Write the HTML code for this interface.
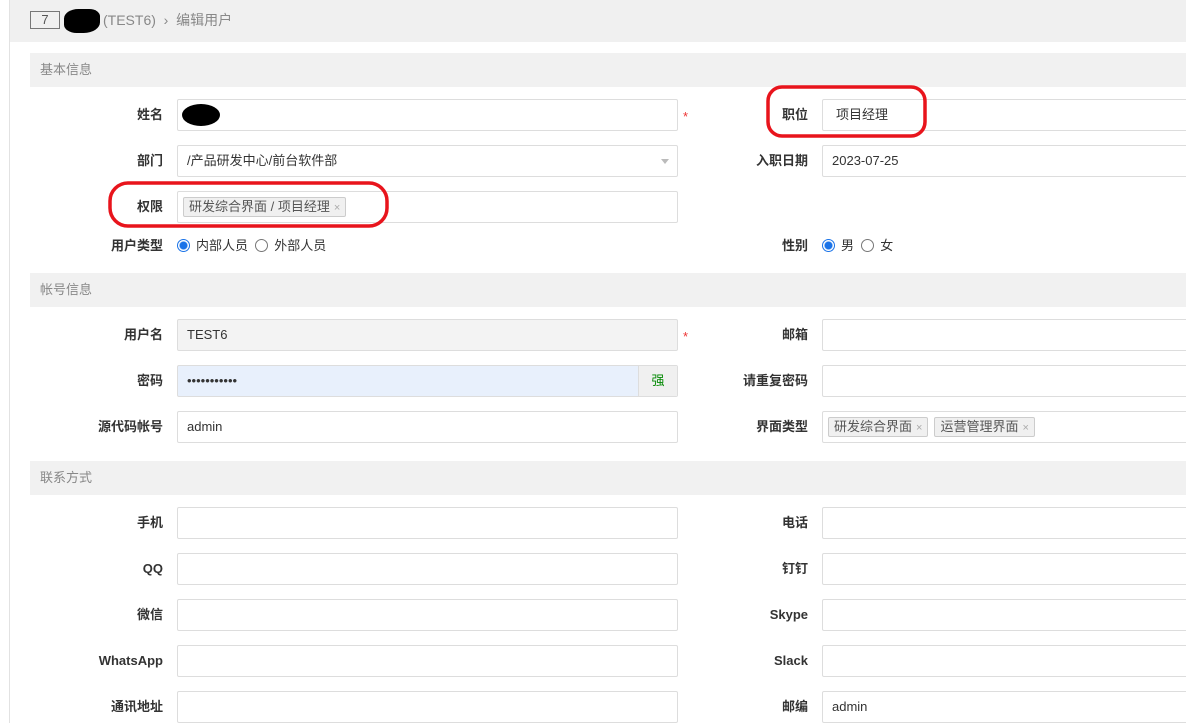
<!DOCTYPE html>
<html><head><meta charset="utf-8"><style>
*{box-sizing:border-box;margin:0;padding:0}
body{width:1186px;height:723px;overflow:hidden;background:#fff;font-family:"Liberation Sans","Noto Sans CJK SC",sans-serif;font-size:13px;color:#333;position:relative;line-height:1.2}
.a{position:absolute}
.lb{position:absolute;text-align:right;font-weight:bold;color:#333;white-space:nowrap;height:32px;line-height:32px}
.in{position:absolute;height:32px;border:1px solid #ddd;border-radius:2px;background:#fff;padding:0 9px;line-height:30px;white-space:nowrap}
.sec{position:absolute;left:30px;width:1156px;height:34px;background:#f1f1f1;color:#888;padding-left:10px;line-height:34px}
.tag{display:inline-block;border:1px solid #ccc;background:#f0f0f0;border-radius:2px;padding:0 5px;line-height:18px;height:20px;margin-top:5px;color:#555;margin-right:6px;vertical-align:top}
.tag i{font-style:normal;color:#aaa;font-size:11px;margin-left:4px}
.r{display:inline-block;width:13px;height:13px;border:1px solid #777;border-radius:50%;vertical-align:-2px;margin-right:6px}
.r.on{border-color:#1a73e8;background:radial-gradient(circle,#1a73e8 3.5px,#fff 4.5px)}
.star{position:absolute;color:#e33;font-size:13px}
.rad{position:absolute;height:20px;line-height:20px}
</style></head><body>
<div class="a" style="left:0;top:0;width:9px;height:723px;background:#fff"></div>
<div class="a" style="left:9px;top:0;width:1px;height:723px;background:#e2e2e2"></div>
<div class="a" style="left:10px;top:0;width:1176px;height:42px;background:#f0f0f0"></div>
<div class="a" style="left:30px;top:11px;width:30px;height:18px;border:1px solid #777;text-align:center;line-height:16px;color:#555;font-size:13px">7</div>
<div class="a" style="left:64px;top:9px;width:36px;height:24px;background:#000;border-radius:40% 30% 45% 35%"></div>
<div class="a" style="left:103px;top:10px;color:#888;font-size:14px;line-height:20px">(TEST6) &nbsp;›&nbsp; 编辑用户</div>

<div class="sec" style="top:53px">基本信息</div>
<div class="lb" style="right:1023px;top:99px">姓名</div>
<div class="in" style="left:177px;top:99px;width:501px"><span class="a" style="left:4px;top:4px;width:38px;height:22px;background:#000;border-radius:50%"></span></div>
<div class="star" style="left:683px;top:109px">*</div>
<div class="lb" style="right:1023px;top:145px">部门</div>
<div class="in" style="left:177px;top:145px;width:501px">/产品研发中心/前台软件部<span class="a" style="right:8px;top:13px;border:4px solid transparent;border-top:5px solid #bbb"></span></div>
<div class="lb" style="right:1023px;top:191px">权限</div>
<div class="in" style="left:177px;top:191px;width:501px;padding-left:5px"><span class="tag">研发综合界面 / 项目经理<i>×</i></span></div>
<div class="lb" style="right:1023px;top:230px">用户类型</div>
<div class="rad" style="left:177px;top:236px"><span class="r on"></span>内部人员 &nbsp;<span class="r"></span>外部人员</div>

<div class="lb" style="right:378px;top:99px">职位</div>
<div class="in" style="left:822px;top:99px;width:370px;padding-left:13px">项目经理</div>
<div class="lb" style="right:378px;top:145px">入职日期</div>
<div class="in" style="left:822px;top:145px;width:370px">2023-07-25</div>
<div class="lb" style="right:378px;top:230px">性别</div>
<div class="rad" style="left:822px;top:236px"><span class="r on"></span>男 &nbsp;<span class="r"></span>女</div>

<div class="sec" style="top:273px">帐号信息</div>
<div class="lb" style="right:1023px;top:319px">用户名</div>
<div class="in" style="left:177px;top:319px;width:501px;background:#f3f3f3">TEST6</div>
<div class="star" style="left:683px;top:329px">*</div>
<div class="lb" style="right:1023px;top:365px">密码</div>
<div class="in" style="left:177px;top:365px;width:501px;background:#e8f0fc;padding-left:9px">•••••••••••<span class="a" style="right:0;top:0;width:39px;height:30px;background:#f0f0f0;border-left:1px solid #ddd;text-align:center;color:#080">强</span></div>
<div class="lb" style="right:1023px;top:411px">源代码帐号</div>
<div class="in" style="left:177px;top:411px;width:501px">admin</div>
<div class="lb" style="right:378px;top:319px">邮箱</div>
<div class="in" style="left:822px;top:319px;width:370px"></div>
<div class="lb" style="right:378px;top:365px">请重复密码</div>
<div class="in" style="left:822px;top:365px;width:370px"></div>
<div class="lb" style="right:378px;top:411px">界面类型</div>
<div class="in" style="left:822px;top:411px;width:370px;padding-left:5px"><span class="tag">研发综合界面<i>×</i></span><span class="tag">运营管理界面<i>×</i></span></div>

<div class="sec" style="top:461px">联系方式</div>
<div class="lb" style="right:1023px;top:507px">手机</div>
<div class="in" style="left:177px;top:507px;width:501px"></div>
<div class="lb" style="right:1023px;top:553px">QQ</div>
<div class="in" style="left:177px;top:553px;width:501px"></div>
<div class="lb" style="right:1023px;top:599px">微信</div>
<div class="in" style="left:177px;top:599px;width:501px"></div>
<div class="lb" style="right:1023px;top:645px">WhatsApp</div>
<div class="in" style="left:177px;top:645px;width:501px"></div>
<div class="lb" style="right:1023px;top:691px">通讯地址</div>
<div class="in" style="left:177px;top:691px;width:501px"></div>
<div class="lb" style="right:378px;top:507px">电话</div>
<div class="in" style="left:822px;top:507px;width:370px"></div>
<div class="lb" style="right:378px;top:553px">钉钉</div>
<div class="in" style="left:822px;top:553px;width:370px"></div>
<div class="lb" style="right:378px;top:599px">Skype</div>
<div class="in" style="left:822px;top:599px;width:370px"></div>
<div class="lb" style="right:378px;top:645px">Slack</div>
<div class="in" style="left:822px;top:645px;width:370px"></div>
<div class="lb" style="right:378px;top:691px">邮编</div>
<div class="in" style="left:822px;top:691px;width:370px">admin</div>

<svg class="a" style="left:0;top:0" width="1186" height="723">
<rect x="768" y="87" width="157" height="49" rx="14" fill="none" stroke="#e8141c" stroke-width="3.5"/>
<rect x="110" y="183" width="277" height="43" rx="18" fill="none" stroke="#e8141c" stroke-width="3.5"/>
</svg>
</body></html>
